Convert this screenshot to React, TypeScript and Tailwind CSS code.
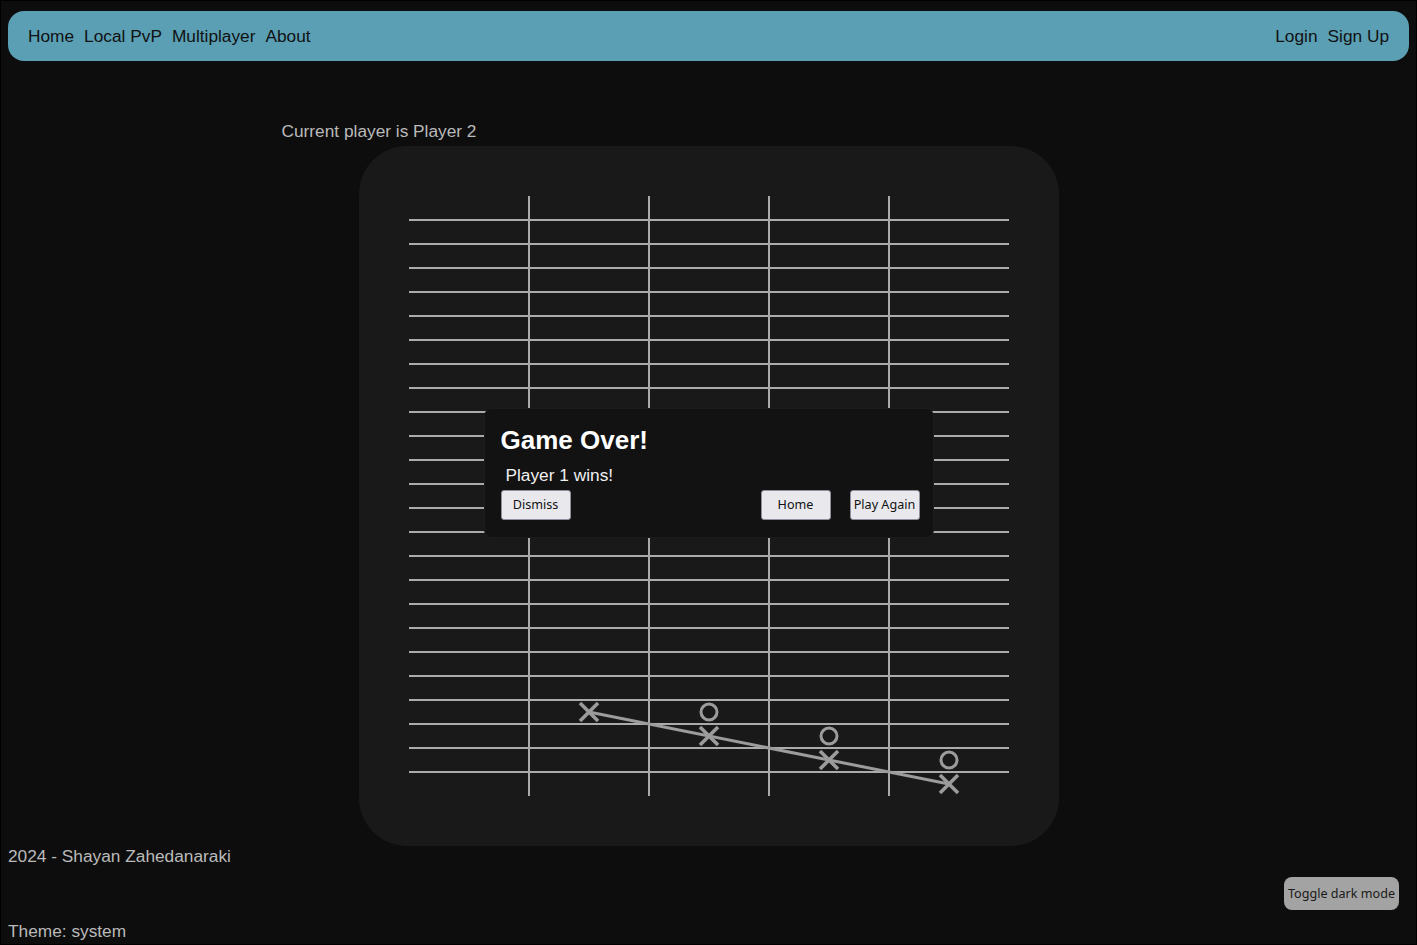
import React from "react";

const COLS = 5;
const ROWS = 25;
const CELL_W = 120;
const CELL_H = 24;

type Mark = { col: number; row: number; kind: "X" | "O" };

const marks: Mark[] = [
  { col: 1, row: 21, kind: "X" },
  { col: 2, row: 21, kind: "O" },
  { col: 2, row: 22, kind: "X" },
  { col: 3, row: 22, kind: "O" },
  { col: 3, row: 23, kind: "X" },
  { col: 4, row: 23, kind: "O" },
  { col: 4, row: 24, kind: "X" },
];

const center = (col: number, row: number) => ({
  x: col * CELL_W + CELL_W / 2,
  y: row * CELL_H + CELL_H / 2,
});

const Board = () => {
  const start = center(1, 21);
  const end = center(4, 24);

  return (
    <svg width={600} height={600} viewBox="0 0 600 600" className="block">
      {Array.from({ length: ROWS - 1 }, (_, i) => (
        <line key={`h${i}`} x1={0} x2={600} y1={(i + 1) * CELL_H} y2={(i + 1) * CELL_H} stroke="#ababab" strokeWidth={2} />
      ))}
      {Array.from({ length: COLS - 1 }, (_, i) => (
        <line key={`v${i}`} y1={0} y2={600} x1={(i + 1) * CELL_W} x2={(i + 1) * CELL_W} stroke="#ababab" strokeWidth={2} />
      ))}
      {marks.map((m, i) => {
        const c = center(m.col, m.row);
        return m.kind === "X" ? (
          <g key={i} stroke="#9c9c9c" strokeWidth={3.5}>
            <line x1={c.x - 9} y1={c.y - 9} x2={c.x + 9} y2={c.y + 9} />
            <line x1={c.x + 9} y1={c.y - 9} x2={c.x - 9} y2={c.y + 9} />
          </g>
        ) : (
          <circle key={i} cx={c.x} cy={c.y} r={8} fill="none" stroke="#9c9c9c" strokeWidth={3} />
        );
      })}
      <line x1={start.x} y1={start.y} x2={end.x} y2={end.y} stroke="#9c9c9c" strokeWidth={3} />
    </svg>
  );
};

const btn =
  "h-[30px] w-[70px] rounded-[3px] border border-[#8f8f9d] bg-[#e9e9ed] pt-[2px] text-[12.6px] text-[#111] font-['Noto_Sans',sans-serif]";

const GameOverDialog = () => (
  <div className="fixed inset-0 flex items-center justify-center">
    <div className="w-[450px] rounded-lg border border-[#1c1c1c] bg-[#121212] px-4 pt-4 pb-[17px]">
      <h2 className="text-[26px] leading-[30px] font-bold text-white">Game Over!</h2>
      <p className="mt-[10px] pl-[5px] text-[17.3px] leading-5 text-[#f0f0f0]">Player 1 wins!</p>
      <div className="mt-[5px] flex items-center">
        <button className={btn}>Dismiss</button>
        <div className="flex-1" />
        <button className={btn}>Home</button>
        <button className={`ml-[19px] mr-[-3px] ${btn}`}>Play Again</button>
      </div>
    </div>
  </div>
);

export default function App() {
  return (
    <div className="h-[945px] overflow-hidden border border-black bg-[#0d0d0d] font-['Liberation_Sans',Arial,sans-serif] text-[17.3px] text-[#bababa]">
      <nav className="mx-[7px] mt-[10px] flex h-[50px] items-center justify-between rounded-2xl bg-[#5a9fb4] px-5 pt-[2px] text-[#111]">
        <div className="flex gap-2.5">
          <a>Home</a>
          <a>Local PvP</a>
          <a>Multiplayer</a>
          <a>About</a>
        </div>
        <div className="flex gap-2.5">
          <a>Login</a>
          <a>Sign Up</a>
        </div>
      </nav>

      <main className="mx-auto mt-[60px] w-[854px]">
        <p className="leading-5">Current player is Player 2</p>
        <div className="mx-auto mt-[5px] w-[700px] rounded-[48px] bg-[#191919] p-[50px]">
          <Board />
        </div>
      </main>

      <footer className="px-[7px]">
        <p className="leading-5">2024 - Shayan Zahedanaraki</p>
        <div className="mt-[11px] flex justify-end pr-[10px]">
          <button className="h-[33px] w-[115px] rounded-lg bg-[#a3a3a3] pt-[2px] text-[12.6px] text-[#1a1a1a] font-['Noto_Sans',sans-serif]">
            Toggle dark mode
          </button>
        </div>
        <p className="mt-[11px] leading-5">Theme: system</p>
      </footer>

      <GameOverDialog />
    </div>
  );
}
